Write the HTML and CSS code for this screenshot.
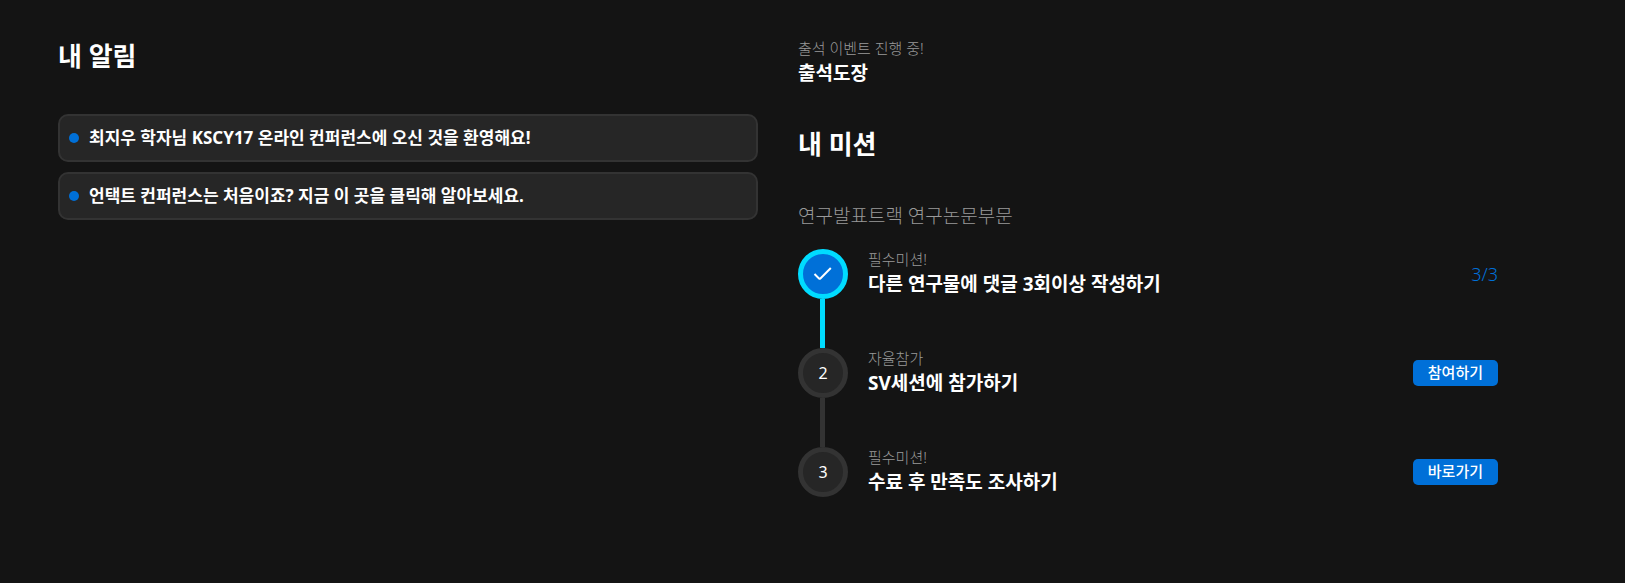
FILE: index.html
```html
<!DOCTYPE html>
<html lang="ko">
<head>
<meta charset="utf-8">
<meta name="viewport" content="width=device-width, initial-scale=1">
<title>내 알림</title>
<link rel="stylesheet" href="styles.css">
</head>
<body>
<main class="dashboard">
  <section class="alerts">
    <h2 class="heading">내 알림</h2>
    <ul class="alert-list">
      <li><a class="alert" href="#"><span class="dot"></span><span>최지우 학자님 KSCY17 온라인 컨퍼런스에 오신 것을 환영해요!</span></a></li>
      <li><a class="alert" href="#"><span class="dot"></span><span>언택트 컨퍼런스는 처음이죠? 지금 이 곳을 클릭해 알아보세요.</span></a></li>
    </ul>
  </section>
  <section class="missions">
    <div class="event">
      <p class="caption">출석 이벤트 진행 중!</p>
      <h3 class="title">출석도장</h3>
    </div>
    <h2 class="heading">내 미션</h2>
    <p class="track">연구발표트랙 연구논문부문</p>
    <ol class="steps">
      <li class="step done">
        <div class="marker"><svg class="check" viewBox="0 0 20 20" aria-label="완료"><path d="M1.5 10 L6 14.4 Q6.7 15 7.4 14.4 L17.8 4"/></svg></div>
        <div class="info">
          <p class="caption">필수미션!</p>
          <h3 class="title">다른 연구물에 댓글 3회이상 작성하기</h3>
        </div>
        <span class="count">3/3</span>
      </li>
      <li class="step">
        <div class="marker">2</div>
        <div class="info">
          <p class="caption">자율참가</p>
          <h3 class="title">SV세션에 참가하기</h3>
        </div>
        <button class="action" type="button">참여하기</button>
      </li>
      <li class="step">
        <div class="marker">3</div>
        <div class="info">
          <p class="caption">필수미션!</p>
          <h3 class="title">수료 후 만족도 조사하기</h3>
        </div>
        <button class="action" type="button">바로가기</button>
      </li>
    </ol>
  </section>
</main>
</body>
</html>
```
FILE: styles.css
```css
* { box-sizing: border-box; margin: 0; padding: 0; }

body {
  background: #141414;
  color: #fff;
  font-family: "Noto Sans", "Noto Sans CJK KR", sans-serif;
}

ul, ol { list-style: none; }

.dashboard {
  display: grid;
  grid-template-columns: 1fr 1fr;
  gap: 40px;
  padding: 38px 127px 40px 58px;
}

.heading {
  font-size: 26px;
  line-height: 36px;
  font-weight: 700;
}

.alert-list {
  display: grid;
  gap: 10px;
  margin-top: 40px;
}

.alert {
  display: flex;
  align-items: center;
  gap: 10px;
  padding: 10px 9px;
  border: 2px solid #333;
  border-radius: 10px;
  background: #262626;
  color: #fff;
  font-size: 17px;
  line-height: 24px;
  font-weight: 700;
  text-decoration: none;
}

.dot {
  width: 10px;
  height: 10px;
  border-radius: 50%;
  background: #0070d8;
}

.caption {
  color: #999;
  font-size: 15px;
  font-weight: 300;
  line-height: 20px;
}

.title {
  font-size: 19px;
  line-height: 30px;
  font-weight: 700;
}

.event { margin-bottom: 38px; }

.track {
  margin-top: 40px;
  color: #999;
  font-size: 19px;
  font-weight: 300;
  line-height: 28px;
}

.steps { margin-top: 19px; }

.step {
  display: flex;
  align-items: flex-start;
  gap: 20px;
  position: relative;
  padding-bottom: 49px;
}

.step:not(:last-child)::after {
  content: "";
  position: absolute;
  top: 50px;
  bottom: 0;
  left: 22px;
  width: 5px;
  background: #333;
}

.step.done::after { background: #00dcff; }

.marker {
  display: flex;
  align-items: center;
  justify-content: center;
  width: 50px;
  height: 50px;
  border: 5px solid #333;
  border-radius: 50%;
  background: #262626;
  font-size: 16px;
}

.done .marker {
  border-color: #00dcff;
  background: #0070d8;
}

.check {
  width: 20px;
  height: 20px;
  fill: none;
  stroke: #fff;
  stroke-width: 2;
}

.info { flex: 1; height: 50px; }

.count, .action {
  margin-top: 12px;
}

.count {
  color: #0070d8;
  font-size: 18px;
  font-weight: 300;
  line-height: 26px;
}

.action {
  padding: 2px 15px 4px;
  border: 0;
  border-radius: 5px;
  background: #0070d8;
  color: #fff;
  font-family: inherit;
  font-size: 15px;
  font-weight: 500;
  line-height: 20px;
}
```
